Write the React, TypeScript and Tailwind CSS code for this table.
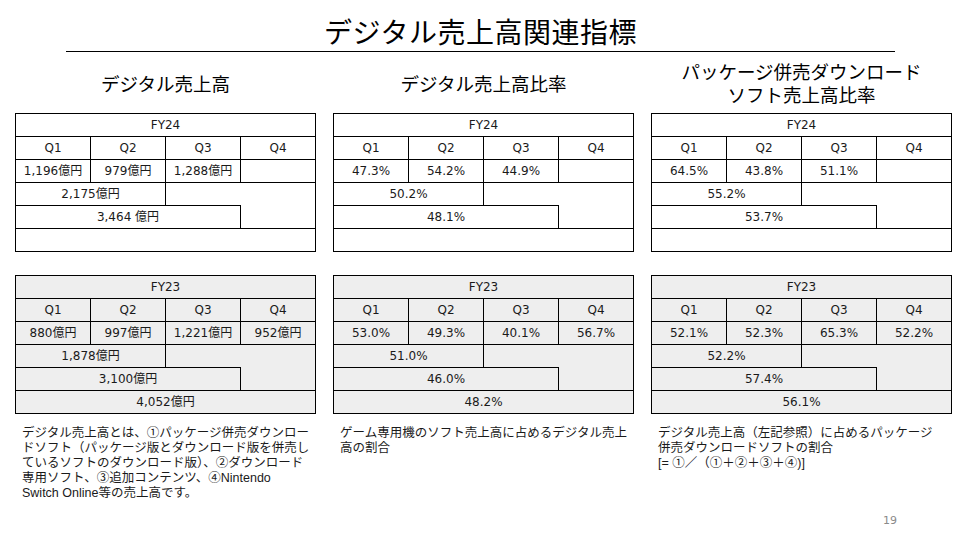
type Sheet = {
  fy: string
  q: string[]
  half: string
  three: string
  full: string
  gray?: boolean
}

type Column = {
  head: string[]
  sheets: Sheet[]
  note: string[]
}

const columns: Column[] = [
  {
    head: ["デジタル売上高"],
    sheets: [
      { fy: "FY24", q: ["1,196億円", "979億円", "1,288億円", ""], half: "2,175億円", three: "3,464 億円", full: "" },
      { fy: "FY23", q: ["880億円", "997億円", "1,221億円", "952億円"], half: "1,878億円", three: "3,100億円", full: "4,052億円", gray: true },
    ],
    note: [
      "デジタル売上高とは、①パッケージ併売ダウンロー",
      "ドソフト（パッケージ版とダウンロード版を併売し",
      "ているソフトのダウンロード版）、②ダウンロード",
      "専用ソフト、③追加コンテンツ、④Nintendo",
      "Switch Online等の売上高です。",
    ],
  },
  {
    head: ["デジタル売上高比率"],
    sheets: [
      { fy: "FY24", q: ["47.3%", "54.2%", "44.9%", ""], half: "50.2%", three: "48.1%", full: "" },
      { fy: "FY23", q: ["53.0%", "49.3%", "40.1%", "56.7%"], half: "51.0%", three: "46.0%", full: "48.2%", gray: true },
    ],
    note: ["ゲーム専用機のソフト売上高に占めるデジタル売上", "高の割合"],
  },
  {
    head: ["パッケージ併売ダウンロード", "ソフト売上高比率"],
    sheets: [
      { fy: "FY24", q: ["64.5%", "43.8%", "51.1%", ""], half: "55.2%", three: "53.7%", full: "" },
      { fy: "FY23", q: ["52.1%", "52.3%", "65.3%", "52.2%"], half: "52.2%", three: "57.4%", full: "56.1%", gray: true },
    ],
    note: ["デジタル売上高（左記参照）に占めるパッケージ", "併売ダウンロードソフトの割合", "[= ①／（①＋②＋③＋④)]"],
  },
]

const cell = "flex items-center justify-center border-r border-b border-black whitespace-nowrap"

function SheetTable({ s }: { s: Sheet }) {
  return (
    <div
      className={
        "grid grid-cols-4 grid-rows-[repeat(6,23px)] border-l border-t border-black text-[12px] text-[#1a1a1a] " +
        (s.gray ? "bg-[#eeeeee]" : "bg-white")
      }
      style={{ fontFamily: '"DejaVu Sans", "Noto Sans CJK JP", sans-serif' }}
    >
      <div className={cell + " col-span-4"}>{s.fy}</div>
      {["Q1", "Q2", "Q3", "Q4"].map((q) => (
        <div key={q} className={cell}>{q}</div>
      ))}
      {s.q.map((v, i) => (
        <div key={i} className={cell}>{v}</div>
      ))}
      <div className={cell + " col-start-1 col-span-2 row-start-4"}>{s.half}</div>
      <div className="col-start-3 row-start-4 border-b border-black" />
      <div className="col-start-4 row-start-4 row-span-2 border-r border-b border-black" />
      <div className={cell + " col-start-1 col-span-3 row-start-5"}>{s.three}</div>
      <div className={cell + " col-start-1 col-span-4 row-start-6"}>{s.full}</div>
    </div>
  )
}

export default function App() {
  return (
    <div
      className="w-[961px] h-[536px] bg-white text-black overflow-hidden flex flex-col"
      style={{ fontFamily: '"Noto Sans CJK JP", sans-serif' }}
    >
      <h1 className="text-center text-[28px] leading-[34px] pt-[14px] tracking-[0.5px]">
        デジタル売上高関連指標
      </h1>
      <div className="mx-[66px] mt-[3px] h-[1px] bg-black" />

      <div className="flex gap-[17px] pl-[15px]">
        {columns.map((c, ci) => (
          <div key={ci} className="w-[301px] shrink-0 flex flex-col">
            <div className="h-[61px] flex flex-col items-center justify-center gap-[1px] text-[18.5px] leading-[22px]">
              {c.head.map((h) => (
                <div key={h}>{h}</div>
              ))}
            </div>
            <SheetTable s={c.sheets[0]} />
            <div className="mt-[23px]">
              <SheetTable s={c.sheets[1]} />
            </div>
            <div
              className="pl-[7px] pt-[12px] text-[12.5px] leading-[15px] text-[#1a1a1a]"
              style={{ fontFamily: '"Liberation Sans", "Noto Sans CJK JP", sans-serif' }}
            >
              {c.note.map((n) => (
                <div key={n} className="whitespace-nowrap">{n}</div>
              ))}
            </div>
          </div>
        ))}
      </div>

      <div className="flex-1" />
      <div className="flex justify-end pr-[64px] pb-[7px] text-[11px] text-[#8a8a8a]" style={{ fontFamily: '"DejaVu Sans", sans-serif' }}>
        19
      </div>
    </div>
  )
}
